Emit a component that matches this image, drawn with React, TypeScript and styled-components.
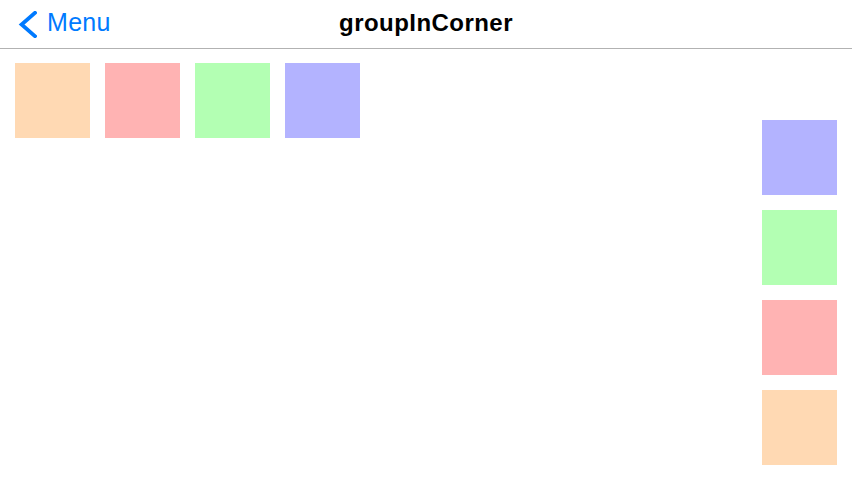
import React from "react";
import styled, { createGlobalStyle } from "styled-components";

const Global = createGlobalStyle`
  html, body { margin: 0; padding: 0; background: #fff; }
  body { font-family: "Liberation Sans", Arial, sans-serif; }
  #root { width: 852px; height: 480px; }
`;

const Page = styled.div`
  width: 852px;
  height: 480px;
  display: flex;
  flex-direction: column;
  overflow: hidden;
`;

const NavBar = styled.header`
  height: 49px;
  box-sizing: border-box;
  padding-bottom: 3px;
  flex: none;
  border-bottom: 1px solid #b2b2b2;
  display: grid;
  grid-template-columns: 1fr auto 1fr;
  align-items: center;
`;

const BackButton = styled.div`
  display: flex;
  align-items: center;
  gap: 10px;
  padding-left: 18px;
  color: #007aff;
  font-size: 25px;
  line-height: 1;
  letter-spacing: 0.3px;
`;

const Chevron = styled.svg`
  margin-top: 3px;
  flex: none;
`;

const Title = styled.div`
  font-size: 24px;
  font-weight: bold;
  color: #000;
  line-height: 1;
  letter-spacing: 0.45px;
`;

const Content = styled.main`
  flex: 1;
  display: flex;
  justify-content: space-between;
  padding: 14px 15px 15px;
`;

const Row = styled.div`
  display: flex;
  gap: 15px;
  align-self: flex-start;
`;

const Column = styled.div`
  display: flex;
  flex-direction: column;
  gap: 15px;
  align-self: flex-end;
`;

const Square = styled.div<{ $color: string }>`
  width: 75px;
  height: 75px;
  background: ${(p) => p.$color};
`;

const ORANGE = "#ffd9b3";
const RED = "#ffb3b3";
const GREEN = "#b3ffb3";
const BLUE = "#b3b3ff";

export default function App() {
  return (
    <>
      <Global />
      <Page>
        <NavBar>
          <BackButton>
            <Chevron width="19" height="27" viewBox="0 0 19 27">
              <path d="M17 1.8 L3.6 13.5 L17 25.2" fill="none" stroke="#007aff" strokeWidth="3.8" strokeLinecap="square" strokeLinejoin="miter" />
            </Chevron>
            <span>Menu</span>
          </BackButton>
          <Title>groupInCorner</Title>
          <div />
        </NavBar>
        <Content>
          <Row>
            <Square $color={ORANGE} />
            <Square $color={RED} />
            <Square $color={GREEN} />
            <Square $color={BLUE} />
          </Row>
          <Column>
            <Square $color={BLUE} />
            <Square $color={GREEN} />
            <Square $color={RED} />
            <Square $color={ORANGE} />
          </Column>
        </Content>
      </Page>
    </>
  );
}
